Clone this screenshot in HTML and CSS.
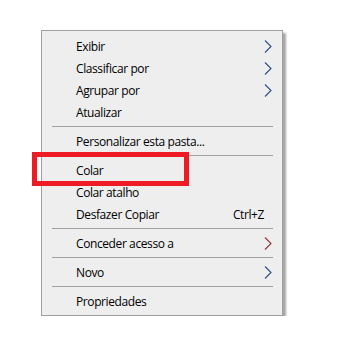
FILE: index.html
```html
<!DOCTYPE html>
<html lang="pt-BR">
<head>
  <meta charset="UTF-8">
  <title>Menu de contexto</title>
  <link rel="stylesheet" href="styles.css">
</head>
<body>
  <div class="menu">
    <div class="item">
      <span class="label">Exibir</span>
      <svg class="arrow" width="8" height="13" viewBox="0 0 8 13"><polyline points="1,0.5 7,6.5 1,12.5" /></svg>
    </div>
    <div class="item">
      <span class="label">Classificar por</span>
      <svg class="arrow" width="8" height="13" viewBox="0 0 8 13"><polyline points="1,0.5 7,6.5 1,12.5" /></svg>
    </div>
    <div class="item">
      <span class="label">Agrupar por</span>
      <svg class="arrow" width="8" height="13" viewBox="0 0 8 13"><polyline points="1,0.5 7,6.5 1,12.5" /></svg>
    </div>
    <div class="item">
      <span class="label">Atualizar</span>
    </div>
    <div class="sep"></div>
    <div class="item">
      <span class="label">Personalizar esta pasta...</span>
    </div>
    <div class="sep"></div>
    <div class="item">
      <span class="label">Colar</span>
    </div>
    <div class="item">
      <span class="label">Colar atalho</span>
    </div>
    <div class="item">
      <span class="label">Desfazer Copiar</span>
      <span class="shortcut">Ctrl+Z</span>
    </div>
    <div class="sep"></div>
    <div class="item">
      <span class="label">Conceder acesso a</span>
      <svg class="arrow red" width="8" height="13" viewBox="0 0 8 13"><polyline points="1,0.5 7,6.5 1,12.5" /></svg>
    </div>
    <div class="sep"></div>
    <div class="item">
      <span class="label">Novo</span>
      <svg class="arrow" width="8" height="13" viewBox="0 0 8 13"><polyline points="1,0.5 7,6.5 1,12.5" /></svg>
    </div>
    <div class="sep"></div>
    <div class="item">
      <span class="label">Propriedades</span>
    </div>

    <!-- marcação vermelha em volta de "Colar" -->
    <div class="highlight"></div>
  </div>
</body>
</html>
```

FILE: styles.css
```css
body {
  margin: 0;
  background: #fff;
  font-family: "Open Sans", "Noto Sans", sans-serif;
  font-size: 12px;
  letter-spacing: -0.4px;
  color: #000;
}

.menu {
  position: relative;
  width: 240px;
  margin: 30px 0 0 41px;
  padding: 4px 0 3px;
  background: #eeeeee;
  border: 1px solid #a0a0a0;
  box-shadow: 3px 3px 2px rgba(0, 0, 0, 0.35);
}

.item {
  display: flex;
  align-items: center;
  height: 22px;
  padding-left: 34px;
}

.label {
  flex: 1;
}

.shortcut {
  margin-right: 18px;
}

.arrow {
  margin-right: 10px;
}

.arrow polyline {
  fill: none;
  stroke: #2a4f86;
  stroke-width: 1.1;
}

.arrow.red polyline {
  stroke: #8a3a36;
}

.sep {
  height: 1px;
  margin: 3px 9px 3px 10px;
  background: #a0a0a0;
}

.highlight {
  position: absolute;
  left: -10px;
  top: 121px;
  width: 147px;
  height: 24px;
  border: 5px solid #ed1c24;
}
```
